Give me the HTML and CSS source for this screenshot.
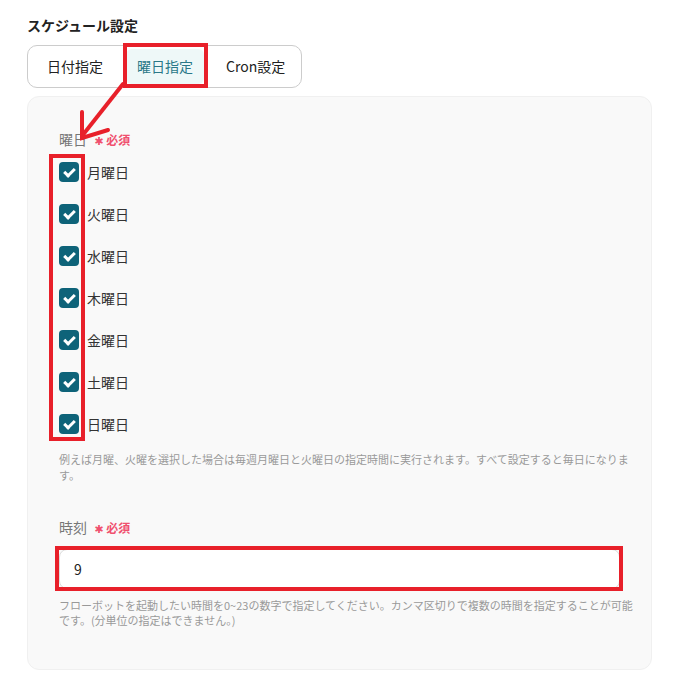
FILE: index.html
```html
<!DOCTYPE html>
<html lang="ja">
<head>
    <meta charset="UTF-8">
    <meta name="viewport" content="width=device-width, initial-scale=1.0">
    <title>スケジュール設定</title>
    <link rel="stylesheet" href="styles.css">
</head>
<body>

<div class="page">
    <h4 class="title">スケジュール設定</h4>

    <!-- タブ -->
    <div class="tabs">
        <div class="tab">日付指定</div>
        <div class="tab active">曜日指定<span class="mark mark-tab"></span></div>
        <div class="tab tab-last">Cron設定</div>
    </div>

    <!-- 注釈の矢印 -->
    <svg class="arrow" width="60" height="70" viewBox="0 0 60 70">
        <path d="M51 4 L10 56" stroke="#e8202a" stroke-width="4" fill="none" stroke-linecap="round"/>
        <path d="M10 32 L10 58 L36 50" stroke="#e8202a" stroke-width="4" fill="none" stroke-linecap="round" stroke-linejoin="miter"/>
    </svg>

    <div class="panel">
        <div class="field">
            <div class="label">曜日 <span class="required"><span class="star">✱</span>必須</span></div>
            <div class="checks">
                <span class="mark mark-checks"></span>
                <label class="check"><span class="box"></span>月曜日</label>
                <label class="check"><span class="box"></span>火曜日</label>
                <label class="check"><span class="box"></span>水曜日</label>
                <label class="check"><span class="box"></span>木曜日</label>
                <label class="check"><span class="box"></span>金曜日</label>
                <label class="check"><span class="box"></span>土曜日</label>
                <label class="check"><span class="box"></span>日曜日</label>
            </div>
            <p class="help">例えば月曜、火曜を選択した場合は毎週月曜日と火曜日の指定時間に実行されます。すべて設定すると毎日になります。</p>
        </div>

        <div class="field">
            <div class="label">時刻 <span class="required"><span class="star">✱</span>必須</span></div>
            <div class="input-wrap">
                <div class="input">9</div>
                <span class="mark mark-input"></span>
            </div>
            <p class="help help-time">フローボットを起動したい時間を0~23の数字で指定してください。カンマ区切りで複数の時間を指定することが可能です。(分単位の指定はできません。)</p>
        </div>
    </div>
</div>

</body>
</html>
```

FILE: styles.css
```css
body {
    margin: 0;
    font-family: "Noto Sans CJK JP", "Noto Sans", sans-serif;
    background-color: #fff;
    color: #333;
}
.page {
    position: relative;
    padding: 15px 31px 20px 27px;
}
.title {
    margin: 0;
    font-size: 14px;
    line-height: 20px;
    font-weight: 700;
    color: #222;
}
.tabs {
    display: inline-flex;
    gap: 12px;
    margin-top: 10px;
    padding: 3px 3px 3px 4px;
    border: 1px solid #ccc;
    border-radius: 10px;
}
.tab {
    position: relative;
    height: 35px;
    line-height: 35px;
    padding: 0 11px 0 15px;
    font-size: 14px;
    color: #222;
    border-radius: 6px;
}
.tab.active {
    padding: 0 11px;
    background-color: #eef8f8;
    color: #2a7888;
}
.tab-last {
    padding: 0 13px 0 10px;
}
.panel {
    margin-top: 8px;
    padding: 32px 31px 41px;
    background-color: #f9f9f9;
    border: 1px solid #f0f0f0;
    border-radius: 12px;
}
.field + .field {
    margin-top: 34px;
}
.label {
    height: 20px;
    font-size: 14px;
    line-height: 20px;
    color: #777;
}
.required {
    margin-left: 4px;
    font-size: 12px;
    font-weight: 700;
    color: #f0506e;
}
.star {
    margin-right: 3px;
    font-family: "DejaVu Sans", sans-serif;
    font-size: 11px;
    line-height: 1;
}
.checks {
    position: relative;
    display: flex;
    flex-direction: column;
    gap: 22px;
    margin-top: 13px;
}
.check {
    display: flex;
    align-items: center;
    gap: 8px;
    height: 20px;
    font-size: 14px;
    color: #333;
}
.box {
    position: relative;
    width: 20px;
    height: 20px;
    border-radius: 4px;
    background-color: #0e6379;
}
.box::after {
    content: "";
    position: absolute;
    left: 7px;
    top: 4px;
    width: 4px;
    height: 8px;
    border: solid #fff;
    border-width: 0 3px 3px 0;
    transform: rotate(45deg);
}
.help {
    margin: 17px -16px 0 0;
    font-size: 11px;
    line-height: 16px;
    color: #999;
}
.help-time {
    margin-top: 9px;
    line-height: 15px;
}
.input-wrap {
    position: relative;
    margin-top: 12px;
}
.input {
    height: 38px;
    line-height: 38px;
    padding: 0 14px;
    font-size: 14px;
    color: #222;
    background-color: #fff;
    border: 1px solid #ddd;
    border-radius: 8px;
}

/* 赤い注釈枠 */
.mark {
    position: absolute;
    border: 4px solid #e8202a;
    pointer-events: none;
}
.mark-tab {
    inset: -6px -4px -4px -3px;
}
.mark-checks {
    left: -10px;
    top: -8px;
    width: 28px;
    bottom: -7px;
}
.mark-input {
    inset: -3px -3px -2px -4px;
}
.arrow {
    position: absolute;
    left: 72px;
    top: 80px;
}
```
